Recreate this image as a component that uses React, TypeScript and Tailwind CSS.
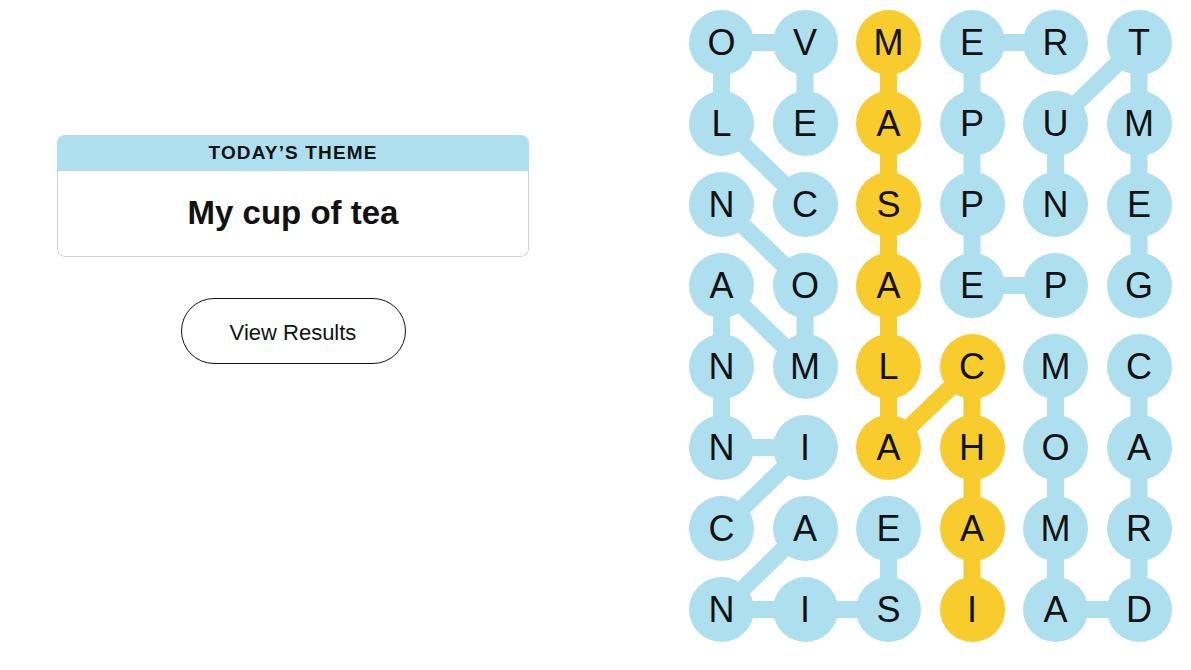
import React from "react";

const LETTERS = [
  ["O", "V", "M", "E", "R", "T"],
  ["L", "E", "A", "P", "U", "M"],
  ["N", "C", "S", "P", "N", "E"],
  ["A", "O", "A", "E", "P", "G"],
  ["N", "M", "L", "C", "M", "C"],
  ["N", "I", "A", "H", "O", "A"],
  ["C", "A", "E", "A", "M", "R"],
  ["N", "I", "S", "I", "A", "D"],
];

const BLUE = "#aedfee";
const YELLOW = "#f8cc2c";

// words as sequences of [col,row]
const WORDS: { path: [number, number][]; spangram?: boolean }[] = [
  { path: [[1, 2], [0, 1], [0, 0], [1, 0], [1, 1]] },
  { path: [[0, 6], [1, 5], [0, 5], [0, 4], [0, 3], [1, 4], [1, 3], [0, 2]] },
  { path: [[1, 6], [0, 7], [1, 7], [2, 7], [2, 6]] },
  { path: [[2, 0], [2, 1], [2, 2], [2, 3], [2, 4], [2, 5], [3, 4], [3, 5], [3, 6], [3, 7]], spangram: true },
  { path: [[4, 3], [3, 3], [3, 2], [3, 1], [3, 0], [4, 0]] },
  { path: [[4, 2], [4, 1], [5, 0], [5, 1], [5, 2], [5, 3]] },
  { path: [[5, 4], [5, 5], [5, 6], [5, 7], [4, 7], [4, 6], [4, 5], [4, 4]] },
];

const cx = (c: number) => 32.5 + c * 83.5;
const cy = (r: number) => 32.5 + r * 81;

const yellowSet = new Set(
  WORDS.filter((w) => w.spangram).flatMap((w) => w.path.map(([c, r]) => `${c},${r}`))
);

export default function App() {
  return (
    <div
      className="flex w-[1191px] h-[670px] bg-white text-[#121212]"
      style={{ fontFamily: '"Liberation Sans", Arial, sans-serif' }}
    >
      <div className="w-[586px] flex flex-col items-center pt-[135px]">
        <div className="w-[472px] h-[122px] rounded-[8px] overflow-hidden flex flex-col">
          <div className="h-[36px] bg-[#aedfee] flex items-center justify-center text-[19px] font-semibold tracking-[0.06em] uppercase">
            Today’s Theme
          </div>
          <div className="flex-1 flex items-center justify-center text-[33px] font-bold pb-[2px] border-x border-b border-[#d0d0d0] rounded-b-[8px]">
            My cup of tea
          </div>
        </div>
        <button className="mt-[41px] w-[225px] h-[66px] rounded-full border border-[#121212] text-[22px] flex items-center justify-center bg-white pt-[3px]">
          View Results
        </button>
      </div>
      <div className="pl-[103px] pt-[10px]">
        <div className="relative">
          <svg className="absolute inset-0" width="482.5" height="632">
            {WORDS.map((w, i) => (
              <polyline
                key={i}
                points={w.path.map(([c, r]) => `${cx(c)},${cy(r)}`).join(" ")}
                fill="none"
                stroke={w.spangram ? YELLOW : BLUE}
                strokeWidth={17}
                strokeLinejoin="round"
              />
            ))}
          </svg>
          <div className="relative grid grid-cols-[repeat(6,65px)] gap-x-[18.5px] gap-y-[16px]">
            {LETTERS.map((row, r) =>
              row.map((ch, c) => (
                <div
                  key={`${r}-${c}`}
                  className={`w-[65px] h-[65px] rounded-full flex items-center justify-center text-[36px] ${
                    yellowSet.has(`${c},${r}`) ? "bg-[#f8cc2c]" : "bg-[#aedfee]"
                  }`}
                >
                  {ch}
                </div>
              ))
            )}
          </div>
        </div>
      </div>
    </div>
  );
}
